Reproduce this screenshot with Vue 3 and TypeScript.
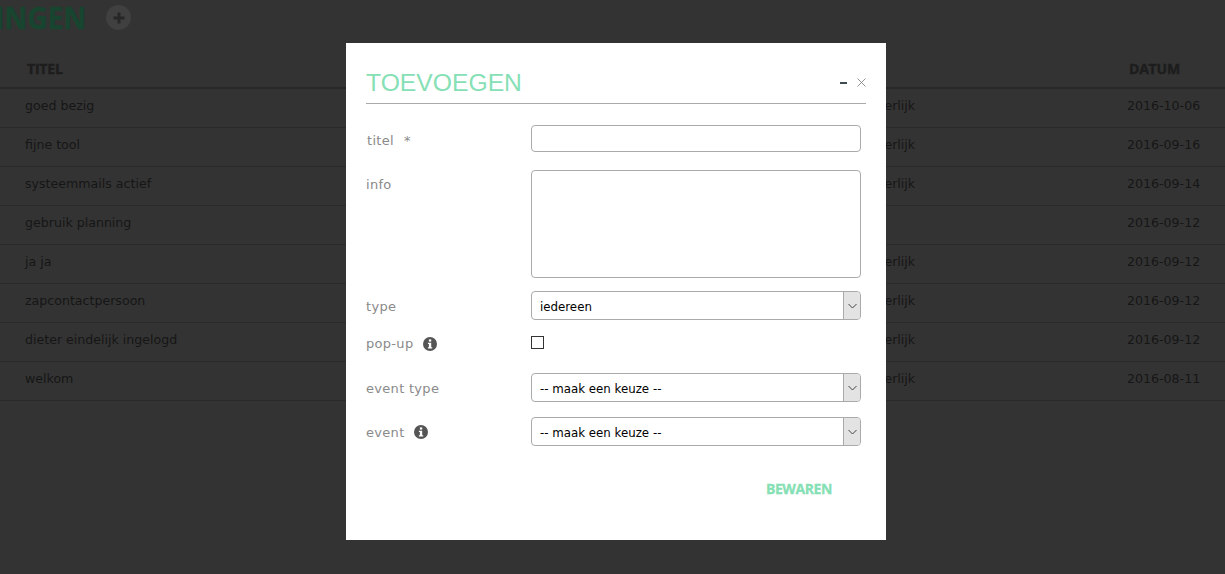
<script setup lang="ts">
interface Row { title: string; kind: string; date: string }
const rows: Row[] = [
  { title: 'goed bezig', kind: 'uiterlijk', date: '2016-10-06' },
  { title: 'fijne tool', kind: 'uiterlijk', date: '2016-09-16' },
  { title: 'systeemmails actief', kind: 'uiterlijk', date: '2016-09-14' },
  { title: 'gebruik planning', kind: '', date: '2016-09-12' },
  { title: 'ja ja', kind: 'uiterlijk', date: '2016-09-12' },
  { title: 'zapcontactpersoon', kind: 'uiterlijk', date: '2016-09-12' },
  { title: 'dieter eindelijk ingelogd', kind: 'uiterlijk', date: '2016-09-12' },
  { title: 'welkom', kind: 'uiterlijk', date: '2016-08-11' },
]
const eventOptions = ['-- maak een keuze --']
</script>

<template>
  <div class="page">
    <header class="page-head">
      <h1 class="page-title">MEDEDELINGEN</h1>
      <span class="add-btn">
        <svg width="12" height="12" viewBox="0 0 12 12"><path d="M4.5 0.5h3v4h4v3h-4v4h-3v-4h-4v-3h4z" fill="#272727" /></svg>
      </span>
    </header>

    <div class="table">
      <div class="row head">
        <span class="c-title">TITEL</span>
        <span class="c-kind"></span>
        <span class="c-date">DATUM</span>
      </div>
      <div v-for="r in rows" :key="r.title" class="row">
        <span class="c-title">{{ r.title }}</span>
        <span class="c-kind">{{ r.kind }}</span>
        <span class="c-date">{{ r.date }}</span>
      </div>
    </div>

    <section class="modal">
      <div class="modal-head">
        <h2 class="modal-title">TOEVOEGEN</h2>
        <span class="minimize"></span>
        <svg class="close" width="9" height="9" viewBox="0 0 9 9"><path d="M0.5 0.5l8 8M8.5 0.5l-8 8" stroke="#777" stroke-width="0.8" fill="none" /></svg>
      </div>

      <form class="form" @submit.prevent>
        <label class="label l-titel">titel <span class="req">*</span></label>
        <input class="field f-titel" type="text" />

        <label class="label l-info">info</label>
        <textarea class="field f-info"></textarea>

        <label class="label l-type">type</label>
        <span class="select-wrap s-type">
          <select class="field select"><option>iedereen</option></select>
          <span class="arrow"><svg width="9" height="6" viewBox="0 0 9 6"><path d="M0.5 1l4 4 4-4" stroke="#444" fill="none" /></svg></span>
        </span>

        <label class="label l-popup">pop-up
          <svg class="info" width="14" height="14" viewBox="0 0 14 14"><circle cx="7" cy="7" r="7" fill="#555" /><rect x="5.9" y="2.4" width="2.3" height="2.2" fill="#fff" /><path d="M4.9 5.7h3.3v4.6h1v1.3H4.9v-1.3h1V7H4.9z" fill="#fff" /></svg>
        </label>
        <span class="check-cell"><input class="check" type="checkbox" /></span>

        <label class="label l-etype">event type</label>
        <span class="select-wrap s-etype">
          <select class="field select"><option v-for="o in eventOptions" :key="o">{{ o }}</option></select>
          <span class="arrow"><svg width="9" height="6" viewBox="0 0 9 6"><path d="M0.5 1l4 4 4-4" stroke="#444" fill="none" /></svg></span>
        </span>

        <label class="label l-event">event
          <svg class="info i-event" width="14" height="14" viewBox="0 0 14 14"><circle cx="7" cy="7" r="7" fill="#555" /><rect x="5.9" y="2.4" width="2.3" height="2.2" fill="#fff" /><path d="M4.9 5.7h3.3v4.6h1v1.3H4.9v-1.3h1V7H4.9z" fill="#fff" /></svg>
        </label>
        <span class="select-wrap s-event">
          <select class="field select"><option v-for="o in eventOptions" :key="o">{{ o }}</option></select>
          <span class="arrow"><svg width="9" height="6" viewBox="0 0 9 6"><path d="M0.5 1l4 4 4-4" stroke="#444" fill="none" /></svg></span>
        </span>
      </form>

      <div class="actions"><button class="save" type="button">BEWAREN</button></div>
    </section>
  </div>
</template>

<style>
html, body { margin: 0; background: #333; }
</style>

<style scoped>
.page {
  position: relative;
  width: 1225px;
  height: 574px;
  overflow: hidden;
  background: #333;
  font-family: "DejaVu Sans", sans-serif;
  font-size: 12.6px;
  color: #161616;
}
.page-head {
  display: flex;
  align-items: center;
  height: 35px;
  margin-left: -151px;
}
.page-title {
  margin: 0;
  font-family: "Open Sans", sans-serif;
  font-weight: 700;
  font-size: 30px;
  line-height: 35px;
  color: #17452f;
  -webkit-text-stroke: .5px #17452f;
  transform: scaleX(.94);
  transform-origin: right center;
}
.add-btn {
  display: flex;
  align-items: center;
  justify-content: center;
  width: 25px;
  height: 25px;
  margin-left: 20px;
  border-radius: 50%;
  background: #404040;
}
.table { margin-top: 17px; }
.row {
  display: grid;
  grid-template-columns: 825px 277px 1fr;
  align-items: center;
  box-sizing: border-box;
  height: 39px;
  padding: 0 0 6px 25px;
  border-bottom: 1px solid #2a2a2a;
}
.row.head {
  height: 37px;
  padding-bottom: 2px;
  border-bottom: 2px solid #282828;
  font-family: "Open Sans", sans-serif;
  font-weight: 700;
  font-size: 14px;
  color: #1d1d1d;
}
.row.head span { padding-left: 2px; letter-spacing: -.2px; -webkit-text-stroke: .4px #1d1d1d; }
.c-kind { padding-left: 18px; }

.modal {
  position: absolute;
  left: 346px;
  top: 43px;
  box-sizing: border-box;
  width: 540px;
  height: 497px;
  padding: 23px 20px 0;
  background: #fff;
  font-size: 13px;
}
.modal-head {
  display: flex;
  align-items: center;
  box-sizing: border-box;
  height: 38px;
  padding-bottom: 4px;
  border-bottom: 1px solid #aaa;
}
.modal-title {
  flex: 1;
  margin: 0;
  font-family: "Liberation Sans", sans-serif;
  font-weight: 400;
  font-size: 24.7px;
  line-height: 34px;
  color: #86e0b5;
}
.minimize {
  width: 7px;
  height: 2px;
  margin: 1px 10px 0 0;
  background: #3f4a50;
}
.form {
  display: grid;
  grid-template-columns: 165px 330px;
  margin-top: 21px;
  color: #8a8a8a;
}
.label { display: flex; align-items: center; box-sizing: border-box; height: 27px; letter-spacing: .3px; }
.l-titel { padding-top: 4px; padding-left: 1px; }
.req { margin-left: 10px; }
.info { margin-left: 10px; }
.l-info { margin-top: 18px; height: 28px; align-self: start; }
.l-type, .s-type { margin-top: 13px; }
.l-type { height: 29px; padding-top: 2px; }
.l-popup { margin-top: 9px; height: 27px; padding-top: 2px; }
.check-cell { margin-top: 9px; height: 27px; display: flex; align-items: center; }
.l-etype, .s-etype { margin-top: 17px; }
.l-etype { height: 29px; padding-top: 2px; }
.l-event, .s-event { margin-top: 15px; }
.l-event { height: 29px; padding-top: 2px; }
.i-event { margin-top: -2px; margin-left: 9px; }
.field {
  box-sizing: border-box;
  width: 330px;
  border: 1px solid #aaa;
  border-radius: 4px;
  background: #fff;
  font-family: "DejaVu Sans", sans-serif;
  font-size: 11.8px;
  color: #000;
  outline: none;
}
.f-titel { height: 27px; }
.f-info { height: 108px; margin-top: 18px; resize: none; display: block; }
.select-wrap { position: relative; display: block; height: 29px; }
.select {
  height: 29px;
  padding: 2px 24px 0 8px;
  appearance: none;
}
.arrow {
  position: absolute;
  top: 1px;
  right: 1px;
  bottom: 1px;
  box-sizing: border-box;
  width: 17px;
  display: flex;
  align-items: center;
  justify-content: center;
  background: #e3e3e3;
  border-left: 1px solid #aaa;
  border-radius: 0 3px 3px 0;
}
.check {
  appearance: none;
  box-sizing: border-box;
  width: 13px;
  height: 13px;
  margin: 0;
  border: 1px solid #333;
  background: #fff;
}
.actions {
  display: flex;
  justify-content: flex-end;
  margin-top: 33px;
  padding-right: 34px;
}
.save {
  padding: 0;
  border: 0;
  background: none;
  font-family: "Open Sans", sans-serif;
  font-weight: 700;
  font-size: 14px;
  line-height: 20px;
  letter-spacing: -.4px;
  color: #86e0b5;
  -webkit-text-stroke: .3px #86e0b5;
}
</style>
